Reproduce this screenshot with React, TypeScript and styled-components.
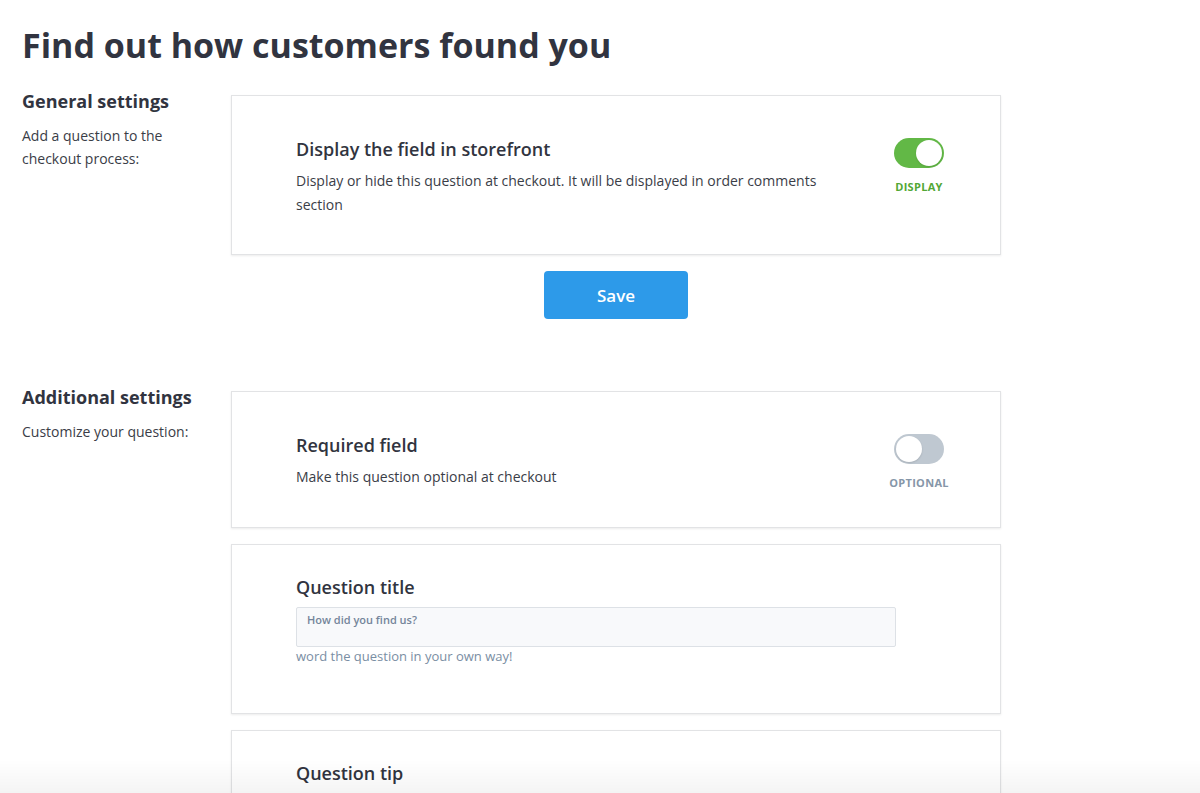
import React, { useState } from "react";
import styled, { createGlobalStyle, css } from "styled-components";

const GlobalStyle = createGlobalStyle`
  html, body {
    margin: 0;
    padding: 0;
    background: #fff;
  }
  body {
    font-family: "Open Sans", "Noto Sans", "Liberation Sans", sans-serif;
    color: #313440;
    -webkit-font-smoothing: antialiased;
  }
  * { box-sizing: border-box; }
`;

const Page = styled.main`
  padding: 22px 0 0 22px;
  width: 1200px;
`;

const PageTitle = styled.h1`
  margin: 0 0 20px;
  font-size: 34px;
  line-height: 46px;
  font-weight: 700;
  color: #313440;
`;

const Section = styled.section`
  display: grid;
  grid-template-columns: 209px 770px;
  align-items: start;
  margin-bottom: 65px;
`;

const Aside = styled.div`
  display: flex;
  flex-direction: column;
  gap: 10px;
`;

const AsideTitle = styled.h2`
  margin: 0;
  font-size: 18px;
  line-height: 26px;
  font-weight: 700;
  color: #313440;
`;

const AsideText = styled.p`
  margin: 0;
  font-size: 14px;
  line-height: 23px;
  color: #3a3d47;
  max-width: 185px;
`;

const Column = styled.div`
  display: flex;
  flex-direction: column;
  gap: 16px;
  padding-top: 7px;
`;

const Card = styled.div<{ $compact?: boolean }>`
  background: #fff;
  border: 1px solid #e2e3e5;
  box-shadow: 0 1px 2px rgba(0, 0, 0, 0.08);
  padding: 40px 53px 37px 64px;
  display: flex;
  align-items: flex-start;
  justify-content: space-between;
  ${({ $compact }) =>
    $compact &&
    css`
      padding: 30px 104px 48px 64px;
      flex-direction: column;
      justify-content: flex-start;
    `}
`;

const CardText = styled.div`
  max-width: 545px;
  display: flex;
  flex-direction: column;
  gap: 6px;
`;

const CardTitle = styled.h3`
  margin: 0;
  font-size: 18px;
  line-height: 27px;
  font-weight: 600;
  color: #313440;
`;

const CardDesc = styled.p`
  margin: 0;
  font-size: 14px;
  line-height: 24px;
  color: #3a3d47;
`;

const ToggleBox = styled.div`
  width: 56px;
  display: flex;
  flex-direction: column;
  align-items: center;
  gap: 12px;
  padding-top: 2px;
`;

const Switch = styled.button<{ $on: boolean }>`
  position: relative;
  width: 50px;
  height: 30px;
  border: none;
  padding: 0;
  border-radius: 15px;
  cursor: pointer;
  background: ${({ $on }) => ($on ? "#62b846" : "#bfc8d1")};
`;

const Knob = styled.span<{ $on: boolean }>`
  position: absolute;
  top: 2px;
  left: ${({ $on }) => ($on ? "22px" : "2px")};
  width: 26px;
  height: 26px;
  border-radius: 50%;
  background: #fff;
  box-shadow: 0 1px 2px rgba(0, 0, 0, 0.12);
  transition: left 0.2s;
`;

const SwitchLabel = styled.span<{ $on: boolean }>`
  font-size: 11px;
  line-height: 14px;
  font-weight: 700;
  letter-spacing: 0.3px;
  white-space: nowrap;
  color: ${({ $on }) => ($on ? "#52a736" : "#8696a8")};
`;

const SaveRow = styled.div`
  display: flex;
  justify-content: center;
`;

const SaveButton = styled.button`
  width: 144px;
  height: 48px;
  border: none;
  border-radius: 4px;
  background: #2d9ae9;
  color: #fff;
  font-family: inherit;
  font-size: 17px;
  font-weight: 600;
  cursor: pointer;
`;

const FieldLabel = styled.label`
  display: block;
  font-size: 18px;
  line-height: 24px;
  font-weight: 600;
  color: #313440;
  margin-bottom: 8px;
`;

const TextBox = styled.textarea`
  display: block;
  width: 600px;
  height: 40px;
  resize: none;
  border: 1px solid #dde1e6;
  border-radius: 2px;
  background: #f8f9fb;
  padding: 5px 10px;
  font-family: inherit;
  font-size: 11px;
  line-height: 14px;
  font-weight: 600;
  color: #6b7c8f;
  outline: none;
  &::placeholder {
    color: #74859a;
  }
`;

const Helper = styled.div`
  font-size: 13px;
  line-height: 18px;
  color: #7a8ea3;
`;

const BottomFade = styled.div`
  position: fixed;
  left: 0;
  right: 0;
  bottom: 0;
  height: 34px;
  pointer-events: none;
  background: linear-gradient(rgba(0, 0, 0, 0), rgba(0, 0, 0, 0.045));
`;

type ToggleProps = {
  on: boolean;
  onText: string;
  offText: string;
  onChange: (v: boolean) => void;
};

const Toggle = ({ on, onText, offText, onChange }: ToggleProps) => (
  <ToggleBox>
    <Switch $on={on} onClick={() => onChange(!on)} aria-pressed={on}>
      <Knob $on={on} />
    </Switch>
    <SwitchLabel $on={on}>{on ? onText : offText}</SwitchLabel>
  </ToggleBox>
);

export default function App() {
  const [display, setDisplay] = useState(true);
  const [required, setRequired] = useState(false);
  const [title, setTitle] = useState("");
  const [tip, setTip] = useState("");

  return (
    <>
      <GlobalStyle />
      <Page>
        <PageTitle>Find out how customers found you</PageTitle>

        <Section>
          <Aside>
            <AsideTitle>General settings</AsideTitle>
            <AsideText>Add a question to the checkout process:</AsideText>
          </Aside>
          <Column>
            <Card>
              <CardText>
                <CardTitle>Display the field in storefront</CardTitle>
                <CardDesc>
                  Display or hide this question at checkout. It will be displayed in order
                  comments section
                </CardDesc>
              </CardText>
              <Toggle on={display} onText="DISPLAY" offText="HIDDEN" onChange={setDisplay} />
            </Card>
            <SaveRow>
              <SaveButton>Save</SaveButton>
            </SaveRow>
          </Column>
        </Section>

        <Section>
          <Aside>
            <AsideTitle>Additional settings</AsideTitle>
            <AsideText>Customize your question:</AsideText>
          </Aside>
          <Column>
            <Card>
              <CardText>
                <CardTitle>Required field</CardTitle>
                <CardDesc>Make this question optional at checkout</CardDesc>
              </CardText>
              <Toggle on={required} onText="REQUIRED" offText="OPTIONAL" onChange={setRequired} />
            </Card>
            <Card $compact>
              <FieldLabel htmlFor="q-title">Question title</FieldLabel>
              <TextBox
                id="q-title"
                placeholder="How did you find us?"
                value={title}
                onChange={(e) => setTitle(e.target.value)}
              />
              <Helper>word the question in your own way!</Helper>
            </Card>
            <Card $compact>
              <FieldLabel htmlFor="q-tip">Question tip</FieldLabel>
              <TextBox
                id="q-tip"
                placeholder="e.g. Facebook, Google, a friend..."
                value={tip}
                onChange={(e) => setTip(e.target.value)}
              />
              <Helper>give customers a hint about how to answer</Helper>
            </Card>
          </Column>
        </Section>
      </Page>
      <BottomFade />
    </>
  );
}
